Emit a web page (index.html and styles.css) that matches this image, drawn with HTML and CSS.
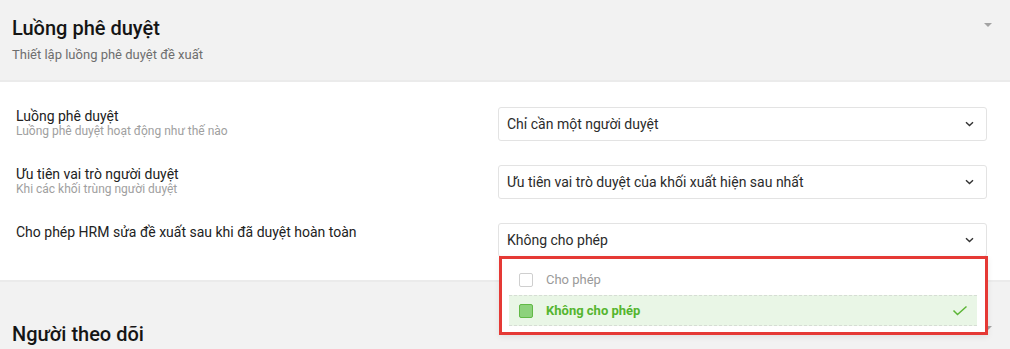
FILE: index.html
```html
<!DOCTYPE html>
<html lang="vi">
<head>
<meta charset="utf-8">
<title>Luồng phê duyệt</title>
<link rel="stylesheet" href="styles.css">
</head>
<body>
<section class="section">
  <header class="section-head">
    <div class="head-text">
      <h2 class="section-title">Luồng phê duyệt</h2>
      <p class="section-sub">Thiết lập luồng phê duyệt đề xuất</p>
    </div>
    <span class="caret"></span>
  </header>
  <div class="panel">
    <div class="row">
      <div class="label-col">
        <div class="label">Luồng phê duyệt</div>
        <div class="hint">Luồng phê duyệt hoạt động như thế nào</div>
      </div>
      <div class="select-wrap">
        <div class="select">
          <span class="select-text">Chỉ cần một người duyệt</span>
          <svg class="chev" width="9" height="6" viewBox="0 0 9 6"><path d="M1 1.2 L4.5 4.6 L8 1.2" fill="none" stroke="#333" stroke-width="1.4"/></svg>
        </div>
      </div>
    </div>
    <div class="row">
      <div class="label-col">
        <div class="label">Ưu tiên vai trò người duyệt</div>
        <div class="hint">Khi các khối trùng người duyệt</div>
      </div>
      <div class="select-wrap">
        <div class="select">
          <span class="select-text">Ưu tiên vai trò duyệt của khối xuất hiện sau nhất</span>
          <svg class="chev" width="9" height="6" viewBox="0 0 9 6"><path d="M1 1.2 L4.5 4.6 L8 1.2" fill="none" stroke="#333" stroke-width="1.4"/></svg>
        </div>
      </div>
    </div>
    <div class="row">
      <div class="label-col">
        <div class="label">Cho phép HRM sửa đề xuất sau khi đã duyệt hoàn toàn</div>
      </div>
      <div class="select-wrap">
        <div class="select">
          <span class="select-text">Không cho phép</span>
          <svg class="chev" width="9" height="6" viewBox="0 0 9 6"><path d="M1 1.2 L4.5 4.6 L8 1.2" fill="none" stroke="#333" stroke-width="1.4"/></svg>
        </div>
        <div class="menu">
          <div class="option">
            <span class="box"></span>
            <span class="opt-text">Cho phép</span>
          </div>
          <div class="option selected">
            <span class="box"></span>
            <span class="opt-text">Không cho phép</span>
            <svg class="tick" width="16" height="12" viewBox="0 0 16 12"><path d="M1.5 5.5 L5.5 9.5 L14.5 1.5" fill="none" stroke="#5cb536" stroke-width="1.5"/></svg>
          </div>
        </div>
      </div>
    </div>
  </div>
</section>
<section class="section second">
  <header class="section-head">
    <div class="head-text">
      <h2 class="section-title">Người theo dõi</h2>
    </div>
    <span class="caret"></span>
  </header>
</section>
</body>
</html>
```

FILE: styles.css
```css
* { box-sizing: border-box; }
html, body { margin: 0; padding: 0; }
body {
  font-family: Roboto, "Noto Sans", "Liberation Sans", sans-serif;
  background: #f2f2f2;
  color: #222;
  width: 1010px;
  height: 349px;
  overflow: hidden;
}
.section { background: #fff; }
.section-head {
  background: #f2f2f2;
  height: 82px;
  padding: 16px 12px 0 12px;
  display: flex;
  justify-content: space-between;
  align-items: flex-start;
  border-bottom: 2px solid #ebebeb;
}
.section-title {
  margin: 0;
  font-size: 20px;
  line-height: 24px;
  font-weight: 500;
  color: #151515;
}
.section-sub {
  margin: 6px 0 0;
  font-size: 13px;
  line-height: 18px;
  color: #6e6e6e;
}
.caret {
  width: 0;
  height: 0;
  border-left: 4px solid transparent;
  border-right: 4px solid transparent;
  border-top: 4px solid #a3a3a3;
  margin: 7px 6px 0 0;
}
.panel {
  padding: 25px 23px 23px 16px;
  display: flex;
  flex-direction: column;
  gap: 24px;
  border-bottom: 2px solid #ebebeb;
  margin-bottom: 21px;
}
.row {
  display: grid;
  grid-template-columns: 482px 1fr;
}
.label-col { padding-top: 1px; }
.label {
  font-size: 14px;
  line-height: 16px;
  color: #222;
}
.hint {
  font-size: 12px;
  line-height: 12px;
  margin-top: 1px;
  color: #a0a0a0;
}
.select-wrap { position: relative; }
.select {
  height: 34px;
  border: 1px solid #e3e3e3;
  border-radius: 3px;
  padding: 0 12px 0 8px;
  display: flex;
  align-items: center;
  justify-content: space-between;
  background: #fff;
}
.select-text {
  font-size: 14px;
  color: #2b2b2b;
}
.chev { display: block; }
.menu {
  position: absolute;
  top: 33px;
  left: 1px;
  width: 489px;
  height: 79px;
  background: #fff;
  border: 3px solid #e53935;
  padding: 5px 8px 0 7px;
  box-shadow: 0 2px 6px rgba(0,0,0,0.08);
  z-index: 2;
}
.option {
  height: 31px;
  display: flex;
  align-items: center;
  padding: 0 9px 0 10px;
  font-size: 13px;
  color: #9a9a9a;
}
.box {
  width: 14px;
  height: 14px;
  border: 1px solid #cfcfcf;
  border-radius: 2px;
  margin-right: 13px;
  background: #fff;
  flex: none;
}
.opt-text { flex: 1; }
.option.selected {
  background: #e9f6e6;
  border-top: 1px dashed #d6ddd4;
  border-bottom: 1px dashed #d6ddd4;
  color: #55b52f;
  font-weight: 700;
}
.option.selected .box {
  background: #8dd27c;
  border-color: #62b947;
}
.tick { display: block; }
.second .section-head {
  padding-top: 19px;
  height: 60px;
  border-bottom: none;
}
.second .caret { margin-top: 4px; }
```
